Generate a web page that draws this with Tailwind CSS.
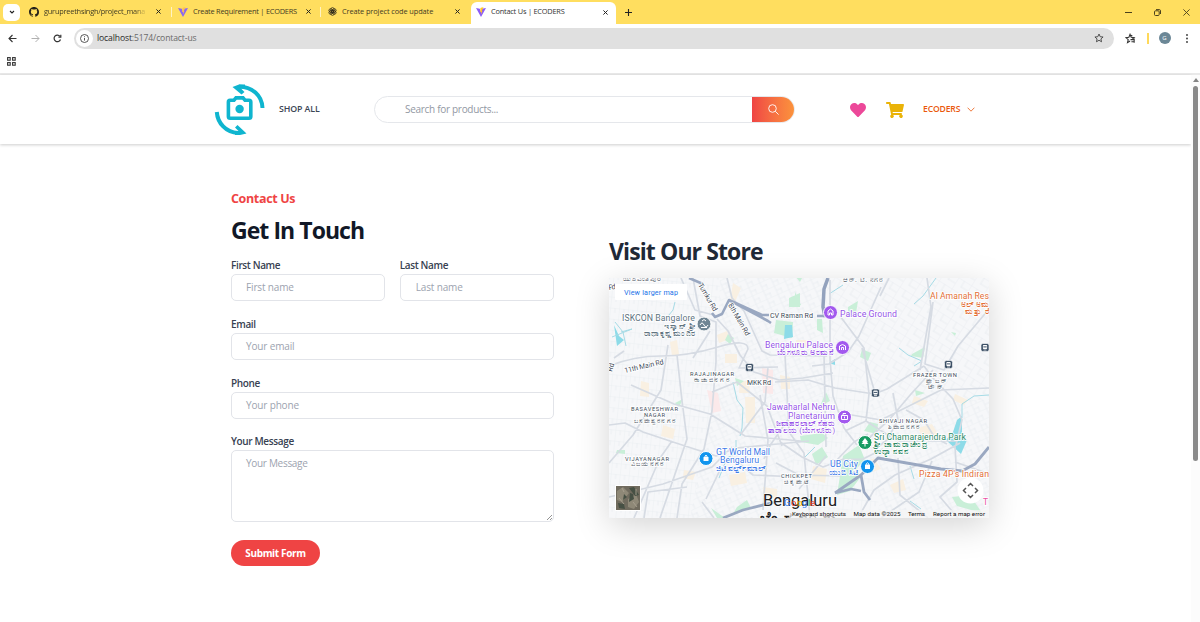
<!DOCTYPE html>
<html lang="en">
<head>
<meta charset="utf-8">
<title>Contact Us | ECODERS</title>
<script src="https://cdn.jsdelivr.net/npm/@tailwindcss/browser@4"></script>
</head>
<body class="w-[1200px] h-[622px] overflow-hidden bg-white font-['Open_Sans','Noto_Sans',sans-serif] text-[#1f2937]">
<div class="flex flex-col h-[622px]">

<!-- Tab strip -->
<div class="flex h-6 shrink-0 items-center bg-[#ffde5f] text-[7.4px] tracking-[-0.22px] text-[#3f3a24]">
  <div class="ml-[3px] flex h-[17px] w-[17px] items-center justify-center rounded-[5px] bg-white">
    <svg class="size-[6px]" viewBox="0 0 6 6" fill="none" stroke="#222" stroke-width="1.1"><path d="M1 2l2 2 2-2"/></svg>
  </div>
  <div class="flex w-[151px] items-center pl-[9px]">
    <svg class="size-[10px] shrink-0" viewBox="0 0 16 16" fill="#24211a"><path d="M8 0C3.58 0 0 3.58 0 8c0 3.54 2.29 6.53 5.47 7.59.4.07.55-.17.55-.38v-1.49c-2.01.37-2.53-.49-2.69-.94-.09-.23-.48-.94-.82-1.13-.28-.15-.68-.52-.01-.53.63-.01 1.08.58 1.23.82.72 1.21 1.87.87 2.33.66.07-.52.28-.87.51-1.07-1.78-.2-3.64-.89-3.64-3.95 0-.87.31-1.59.82-2.15-.08-.2-.36-1.02.08-2.12 0 0 .67-.21 2.2.82a7.5 7.5 0 014 0c1.53-1.04 2.2-.82 2.2-.82.44 1.1.16 1.92.08 2.12.51.56.82 1.27.82 2.15 0 3.07-1.87 3.75-3.65 3.95.29.25.54.73.54 1.48v2.2c0 .21.15.46.55.38A8 8 0 0016 8c0-4.42-3.58-8-8-8z"/></svg>
    <span class="ml-[5px] w-[103px] overflow-hidden whitespace-nowrap [mask-image:linear-gradient(to_right,black_88%,transparent)]">gurupreethsingh/project_mana</span>
    <svg class="ml-[9px] size-[5px] shrink-0" viewBox="0 0 6 6" stroke="#222" stroke-width="1.2"><path d="M.5.5l5 5M5.500.5l-5 5"/></svg>
  </div>
  <div class="h-[10px] w-px bg-[#fff3c4]"></div>
  <div class="flex w-[148px] items-center pl-[6px]">
    <svg class="size-[10px] shrink-0" viewBox="0 0 10 10"><path d="M0 1l5 9 5-9-4.500.8L5 5 3.800 1.700z" fill="#8b68f0"/><path d="M5.800.5L7.500.2 5.700 4.200 6.500 4 4.900 7.500 5.200 4.900 4.200 5.100 4.400 1z" fill="#ffc24a"/></svg>
    <span class="ml-[5px] w-[104px] whitespace-nowrap">Create Requirement | ECODERS</span>
    <svg class="ml-[9px] size-[5px] shrink-0" viewBox="0 0 6 6" stroke="#222" stroke-width="1.2"><path d="M.5.5l5 5M5.500.5l-5 5"/></svg>
  </div>
  <div class="h-[10px] w-px bg-[#fff3c4]"></div>
  <div class="flex w-[150px] items-center pl-[7px] tracking-[-0.1px]">
    <svg class="size-[9px] shrink-0" viewBox="0 0 10 10" fill="none" stroke="#2c281b" stroke-width=".8"><ellipse cx="5" cy="3.300" rx="2" ry="2.700"/><ellipse cx="5" cy="6.700" rx="2" ry="2.700"/><ellipse cx="3.500" cy="4.200" rx="2" ry="2.700" transform="rotate(-60 3.500 4.200)"/><ellipse cx="6.500" cy="5.800" rx="2" ry="2.700" transform="rotate(-60 6.500 5.800)"/><ellipse cx="3.500" cy="5.800" rx="2" ry="2.700" transform="rotate(60 3.500 5.800)"/><ellipse cx="6.500" cy="4.200" rx="2" ry="2.700" transform="rotate(60 6.500 4.200)"/></svg>
    <span class="ml-[5px] w-[104px] whitespace-nowrap">Create project code update</span>
    <svg class="ml-[9px] size-[5px] shrink-0" viewBox="0 0 6 6" stroke="#222" stroke-width="1.2"><path d="M.5.5l5 5M5.500.5l-5 5"/></svg>
  </div>
  <div class="flex h-[22px] w-[145px] items-center self-end rounded-t-[6px] bg-white pb-[2px] pl-[5px] text-[#333]">
    <svg class="size-[10px] shrink-0" viewBox="0 0 10 10"><path d="M0 1l5 9 5-9-4.500.8L5 5 3.800 1.700z" fill="#8b5cf6"/><path d="M5.800.5L7.500.2 5.700 4.200 6.500 4 4.900 7.500 5.200 4.900 4.200 5.100 4.400 1z" fill="#ffc928"/></svg>
    <span class="ml-[5px] w-[103px] whitespace-nowrap">Contact Us | ECODERS</span>
    <svg class="ml-[9px] size-[5px] shrink-0" viewBox="0 0 6 6" stroke="#222" stroke-width="1.2"><path d="M.5.5l5 5M5.500.5l-5 5"/></svg>
  </div>
  <svg class="ml-[9px] size-[7px]" viewBox="0 0 7 7" stroke="#222" stroke-width="1.1"><path d="M3.500 0v7M0 3.500h7"/></svg>
  <div class="ml-auto flex items-center gap-[22px] pr-[10px]">
    <svg class="h-[7px] w-[7px]" viewBox="0 0 7 7" stroke="#4a401c" stroke-width="1"><path d="M0 3.500h7"/></svg>
    <svg class="size-[7px]" viewBox="0 0 7 7" fill="none" stroke="#4a401c" stroke-width="1"><rect x=".5" y="1.800" width="4.700" height="4.700" rx="1"/><path d="M2 .6h3.200q1.300 0 1.300 1.300V5"/></svg>
    <svg class="size-[7px]" viewBox="0 0 7 7" stroke="#4a401c" stroke-width=".9"><path d="M.4.4l6.200 6.200M6.600.4L.4 6.600"/></svg>
  </div>
</div>

<!-- Address bar -->
<div class="flex h-7 shrink-0 items-center bg-white">
  <svg class="ml-2 size-[9px]" viewBox="0 0 9 9" fill="none" stroke="#333" stroke-width="1.1"><path d="M8.500 4.500H1M4.500 1L1 4.500 4.500 8"/></svg>
  <svg class="ml-[14px] size-[9px]" viewBox="0 0 9 9" fill="none" stroke="#b0b0b0" stroke-width="1"><path d="M.5 4.500H8M4.500 1L8 4.500 4.500 8"/></svg>
  <svg class="ml-[13px] size-[9px]" viewBox="0 0 9 9" fill="none" stroke="#333" stroke-width="1.200"><path d="M7.500 5.500A3.300 3.300 0 1 1 7 2.300"/><path d="M7.800.8v2.400H5.400"/></svg>
  <div class="ml-[12px] flex h-[21px] w-[1040px] shrink-0 items-center rounded-full bg-[#e0e0e0] pl-[2px] pr-[10px]">
    <div class="flex size-[17px] items-center justify-center rounded-full bg-white">
      <svg class="size-[9px]" viewBox="0 0 9 9" fill="none" stroke="#444" stroke-width=".9"><circle cx="4.500" cy="4.500" r="4"/><path d="M4.500 4v2.600M4.500 2.300v.9"/></svg>
    </div>
    <span class="ml-1 text-[8.6px] tracking-[-0.13px] text-[#6a6a6a]"><span class="text-[#2a2a2a]">localhost</span>:5174/contact-us</span>
    <svg class="ml-auto size-[10px]" viewBox="0 0 24 24" fill="none" stroke="#444" stroke-width="2.200"><path d="M12 2.500l2.900 6.400 6.900.7-5.200 4.600 1.500 6.800L12 17.500 5.900 21l1.500-6.800L2.200 9.600l6.900-.7z"/></svg>
  </div>
  <svg class="ml-[11px] size-[11px] shrink-0" viewBox="0 0 24 24" fill="none" stroke="#333" stroke-width="2.400"><path d="M11 17.500L5.500 21 7 14.500 2 10l6.500-.7L11 3l2.500 6.300 6.500.7-4 3.500"/><path d="M13 5l3 1.500M12 14.500h9M14 19h7M20 12v9"/></svg>
  <div class="ml-[11px] h-[11px] w-[1.5px] shrink-0 bg-[#ffd95a]"></div>
  <div class="ml-[10px] flex size-[12px] shrink-0 items-center justify-center rounded-full bg-[#6b8796] text-[6px] text-white">G</div>
  <svg class="ml-[14px] h-[9px] w-[4px] shrink-0" viewBox="0 0 4 9" fill="#333"><circle cx="2" cy="1" r=".9"/><circle cx="2" cy="4.500" r=".9"/><circle cx="2" cy="8" r=".9"/></svg>
</div>
<div class="flex h-[23px] shrink-0 items-center border-b-2 border-[#e9e9e9] pl-[7px]">
  <svg class="mb-[3px] size-[9px]" viewBox="0 0 9 9" fill="none" stroke="#333" stroke-width="1.100"><rect x=".6" y=".6" width="2.600" height="2.600"/><rect x="5.600" y=".6" width="2.600" height="2.600"/><rect x=".6" y="5.600" width="2.600" height="2.600"/><rect x="5.600" y="5.600" width="2.600" height="2.600"/></svg>
</div>

<div class="flex min-h-0 flex-1">
<div class="flex w-[1191px] flex-col">
  <!-- Site header -->
  <header class="flex h-[69px] shrink-0 items-center bg-white shadow-[0_1px_3px_rgba(0,0,0,0.2)]">
    <svg class="ml-[214px] h-[52px] w-[52px]" viewBox="0 0 52 52" fill="none" stroke="#0fb5cf">
      <path d="M25 2.500C38 3 48 11 48.500 24" stroke-width="4"/><path d="M18.500 3L25 .5h6v4h-4l3.500 3.500L27.500 10.500z" fill="#0fb5cf" stroke="none"/>
      <path d="M2.800 28C3.500 39 12 48.500 24 49" stroke-width="4"/><path d="M32.500 49.500L26 51h-5v-4h3.500L21 43.500l2.500-2.500z" fill="#0fb5cf" stroke="none"/>
      <path d="M16 16.200h4l2-2.300h7l2 2.300h4q1.800 0 1.800 1.800v14.500q0 1.800-1.800 1.800H16.200q-1.800 0-1.800-1.800V18q0-1.800 1.600-1.800z" stroke-width="3.600"/><circle cx="25.600" cy="25" r="4.200" fill="#0fb5cf" stroke="none"/>
    </svg>
    <a class="ml-[13px] w-[95px] whitespace-nowrap text-[8.8px] font-semibold tracking-[-0.1px] text-[#3b4554]">SHOP ALL</a>
    <div class="flex h-[27px] w-[421px] overflow-hidden rounded-full border border-[#e5e7eb]">
      <div class="flex flex-1 items-center pl-[30px] text-[10px] tracking-[-0.3px] text-[#9298a3]">Search for products...</div>
      <div class="flex w-[42px] items-center justify-center bg-linear-to-r from-[#ef4444] to-[#fb923c]">
        <svg class="size-[11px]" viewBox="0 0 11 11" fill="none" stroke="#fff" stroke-width=".9"><circle cx="4.500" cy="4.500" r="3.800"/><path d="M7.300 7.300l3.300 3.300"/></svg>
      </div>
    </div>
    <svg class="ml-[55px] h-[14px] w-[16px]" viewBox="0 0 512 448" fill="#ec4899"><path d="M462 31C407-15 326-7 276 45l-20 20-20-20C186-7 105-15 50 31c-63 54-66 150-10 208l193 200c13 13 33 13 46 0l193-200c56-58 53-154-10-208z"/></svg>
    <svg class="ml-[20px] h-[16px] w-[18px]" viewBox="0 0 576 512" fill="#eab308"><path d="M528 301l47-208c4-15-8-29-23-29H159l-9-45C148 8 138 0 127 0H24C11 0 0 11 0 24v16c0 13 11 24 24 24h70l70 343a56 56 0 1067 9h210a56 56 0 1064-10l5-26c4-15-8-29-23-29H218l-6-32h293c11 0 21-8 23-18z"/></svg>
    <span class="ml-[19px] whitespace-nowrap text-[8.600px] font-semibold tracking-[-0.15px] text-[#ea580c]">ECODERS</span>
    <svg class="ml-[7px] h-[5px] w-[8px]" viewBox="0 0 8 5" fill="none" stroke="#ea580c" stroke-width=".8"><path d="M.6.7L4 4.200 7.400.7"/></svg>
  </header>

  <main class="flex">
    <form class="ml-[231px] mt-[46px] w-[322.500px] text-[#1f2937]">
      <div class="text-[12.500px] font-bold leading-[18px] tracking-[-0.35px] text-[#ef4444]">Contact Us</div>
      <h1 class="mt-[5px] text-[23px] font-bold leading-[35px] tracking-[-0.95px] text-[#111827]">Get In Touch</h1>
      <div class="mt-[9px] flex gap-[15px]">
        <div class="flex-1"><label class="block text-[10px] font-semibold leading-[16px] tracking-[-0.36px] text-[#374151]">First Name</label><div class="mt-[1px] flex h-[27px] items-center rounded-[5px] border border-[#e2e4e9] pl-[14px] text-[10px] tracking-[-0.15px] text-[#9ca3af]">First name</div></div>
        <div class="flex-1"><label class="block text-[10px] font-semibold leading-[16px] tracking-[-0.36px] text-[#374151]">Last Name</label><div class="mt-[1px] flex h-[27px] items-center rounded-[5px] border border-[#e2e4e9] pl-[15px] text-[10px] tracking-[-0.15px] text-[#9ca3af]">Last name</div></div>
      </div>
      <label class="mt-[15px] block text-[10px] font-semibold leading-[16px] tracking-[-0.36px] text-[#374151]">Email</label><div class="mt-[1px] flex h-[27px] items-center rounded-[5px] border border-[#e2e4e9] pl-[14px] text-[10px] tracking-[-0.15px] text-[#9ca3af]">Your email</div>
      <label class="mt-[15px] block text-[10px] font-semibold leading-[16px] tracking-[-0.36px] text-[#374151]">Phone</label><div class="mt-[1px] flex h-[27px] items-center rounded-[5px] border border-[#e2e4e9] pl-[14px] text-[10px] tracking-[-0.15px] text-[#9ca3af]">Your phone</div>
      <label class="mt-[14px] block text-[10px] font-semibold leading-[16px] tracking-[-0.36px] text-[#374151]">Your Message</label>
      <div class="mt-[1px] flex h-[72px] justify-between rounded-[5px] border border-[#e2e4e9] pl-[14px] pt-[5px] text-[10px] leading-[15px] tracking-[-0.3px] text-[#9ca3af]">Your Message
        <svg class="size-[7px] self-end" viewBox="0 0 7 7" stroke="#777" stroke-width=".8"><path d="M1 6l5-5M4 6l2-2"/></svg>
      </div>
      <div class="mt-[18px] flex h-[26px] w-[89px] items-center justify-center rounded-full bg-[#ef4444] text-[10px] font-bold tracking-[-0.35px] text-white">Submit Form</div>
    </form>

    <section class="ml-[55.500px] mt-[89px] w-[380px]">
      <h2 class="text-[23px] font-bold leading-[36px] tracking-[-0.9px] text-[#1f2937]">Visit Our Store</h2>
      <svg class="mt-[9px] block h-[240px] w-[380px] shadow-[0_8px_32px_rgba(0,0,0,0.17)]" viewBox="609 278 380 240" font-family="Roboto, 'Noto Sans', sans-serif">
        <defs>
          <pattern id="s1" width="9" height="11" patternUnits="userSpaceOnUse" patternTransform="rotate(6)"><path d="M0 0H9M0 0V11M5 0V5" stroke="#eaedf1" stroke-width=".8" fill="none"/></pattern>
          <pattern id="s2" width="12" height="9" patternUnits="userSpaceOnUse" patternTransform="rotate(-24)"><path d="M0 0H12M3 0V9M8 4V9M3 5H9" stroke="#eaedf1" stroke-width=".8" fill="none"/></pattern>
          <pattern id="s3" width="15" height="13" patternUnits="userSpaceOnUse" patternTransform="rotate(32)"><path d="M0 0H15M0 0V13M7 0V8M7 7H15" stroke="#e9ecf0" stroke-width=".8" fill="none"/></pattern>
          <g id="train"><rect x="-4" y="-4" width="8" height="8" rx="1.800" fill="#3d5167" stroke="#fff" stroke-width=".6"/><rect x="-2.100" y="-2.400" width="4.200" height="3.900" rx=".7" fill="#fff"/><path d="M-1.700 -.6h3.400" stroke="#3d5167" stroke-width="1"/><path d="M-1.500 2.500h3" stroke="#fff" stroke-width=".7"/></g>
        </defs>
        <rect x="609" y="278" width="380" height="240" fill="#f6f7f9"/>
        <!-- Side streets by district -->
        <path d="M609 278H720L716 380 690 518H609z" fill="url(#s1)"/>
        <path d="M720 278H826L830 400 760 518H690L716 380z" fill="url(#s2)"/>
        <path d="M830 330L870 400 880 518H760L815 420z" fill="url(#s1)"/>
        <path d="M826 278H989V400H870L830 330z" fill="url(#s3)"/>
        <path d="M870 400H989V518H880z" fill="url(#s2)"/>
        <g fill="#f9f0e2"><path d="M641 381l8 2v14l-9-1zM663 425l12 4-2 10-12-3zM717 335l10-4 3 8-11 4zM725 354h12v9h-12zM670 342l7-2 2 15-7 1zM740 381h9l1 12h-11zM745 397l10 0 0 26-9 0zM684 470l12 2-3 8-10-2zM729 475l16-3 2 11-16 3zM780 375l10 2v12h-9zM796 340h13v7h-13zM914 396l14 5-4 6-12-4zM918 428l14-4 6 10-15 4zM862 464l12-6 7 11-15 5zM813 466l14 3-2 14-14-4zM890 485l13-6 3 11-12 3zM955 394l13 6-4 5-11-5zM763 487l14 2v9h-14zM733 283l8 5-6 14-5-2z"/></g>
        <g fill="#fbe9ea"><path d="M707 390l11 3 3 18-9 2zM762 368l11 2v24l-10-1z"/></g>
        <g fill="#c9efd8"><path d="M789 298l11-5v14h-11zM776 320l17 2-1 16-18-5zM795 292l6 13-6 2zM817 319l5 0 1 14-6-3zM728 334l6 4-4 6-5-4zM735 378l9 3-7 5zM675 403l8-4-4 8zM617 450l8 0 0 4-9-1zM711 508l14 10h-8zM737 507l10-7 4 8-18 6zM862 349l9 4-3 8-8-4zM912 354l13-7-2 11-12-2zM870 422l8 2-1 10-13-3zM843 456l16-11 6 15-8 8 3 10-10 13-13 4zM800 436l22-3 6 5-10 7-17-3zM812 454l10-7 6 10-12 8zM826 392l4 9-10 5zM952 497l18-2 12 18-25-7zM795 276l8 0-3 6zM951 332l5 1-1 3zM848 307l10-6-2 12-8 2zM915 390l10 3-9 3z"/></g>
        <g fill="#8ddbe8"><path d="M785 325l7 0 1 12-9 2zM957 420l5-4v18l5 6-6 14-15-14 7-8zM829 363l6-4v6zM614 325l5 11 5 4-7 6z"/></g>
        <g fill="none" stroke="#a6dbe6" stroke-width="1"><path d="M615 322l8 10 3 14M612 337l20-8-11 3M665 320l8-10 2-8M733 382l4 18 6 8-1 20-2 8M736 440l0 13-9 5-8 20M829 294l14-9M914 304l9-8 13-18M899 348l9 7 14 6-8 5M962 418v-14l12-8 15-1M805 457l10-10M914 479l-4-13M910 501l11 8"/></g>
        <!-- Main roads -->
        <g fill="none" stroke="#d6dbe3" stroke-width="1.700" stroke-linejoin="round"><path d="M609 366q25-10 52-10t57-9 30 2l-9 19 39-1M609 425l16-2 18 9 33 11 40 13 20-8 73-7M693 278l7 38 16 6v40l-4 49-8 38-22 35-5 34M681 278l14 32 22 6M717 319l11 12 12 24 14 17 25 8 24-2 30-5M710 331l-17 27M668 345l-7 45-28 45-24 28M609 497l54-13 49-17 20-20M634 518l26-60 12-17M631 385l43 19 36 10 35 22 56 5M727 278l5 20 12 13 18 40 8 4 57 1M614 358l10-7M677 355l5 46 5 38-27 79M712 392l25-10 30 24 15 40M741 434l24-32 3-35M760 395l8 45-5 70M785 355l4 77 15 21 6 65M824 355l2 92M830 280l0 79 3 37 11 32 13 17M840 316l24 32 5 46-3 27-21 10M881 287l-22 49-11 16-19 12-17 2M862 348l13 45M933 302l-8 62 19 6 14-24 31-37M889 278l-9 18M927 278l4 29-11 63M924 366l-37 23-13 5-39-6-27-8-33 2M924 366l8 11 21 22 9 21-6 25M893 393l5 27-11 20-12 9M866 421l31 20 59 0M846 414l35 6 60-30 48-2M869 438l20-18 22-26 22-24M906 410l18 10 11 18 12 6M883 449l-20 10-33 1M835 462l19-20 14-8M780 442l22 15 21 10 21-8M789 418l-18 26-7 15M826 456l-27 33M960 443l-29 16-36 16-21 15-16 28M955 446l2 36-17 15 18 21M955 462l34 12M898 458l2 37 28 23M932 461l-13 31-38 26M776 463l23 12 42 1M741 465l12 10 46 2M702 502l12 16M720 470l-14 29M644 518l4-26 39-5"/></g>
        <g fill="none" stroke="#9aa8c1" stroke-linejoin="round"><path d="M689 278l14 6M712 313l3 4 7-3 7-14 39 21 3 2M729 300l33 15h7M817 316h8" stroke-width="2.600"/><path d="M828 278l-4 11-1 18 2 10" stroke="#93a2bd" stroke-width="3.500"/><path d="M723 518l20-8 32-8M861 475l17-17 63 11 21 2 13-7 14-17M861 475l-26 18M861 475l3 17 6 8M835 493l16-4 10 2" stroke-width="2.800"/></g>
        <!-- Labels -->
        <g stroke="#fff" stroke-width="2" stroke-linejoin="round" paint-order="stroke" stroke-opacity=".85">
          <g fill="#3f4a57" font-size="7.200">
            <text x="623" y="280.500" textLength="38">ಯಶವಂತಪುರ</text><text transform="translate(609 290) rotate(-10)" textLength="7">Rd</text>
            <text transform="translate(698 285) rotate(60)" textLength="31">Tumkur Rd</text><text transform="translate(728 305) rotate(60)" textLength="36">8th Main Rd</text>
            <text x="770" y="317.500" textLength="43">CV Raman Rd</text><text transform="translate(625 373) rotate(-13)" textLength="40">11th Main Rd</text><text x="747" y="384.500" textLength="24">MKK Rd</text>
            <text transform="translate(612 372) rotate(-75)">Rd</text>
          </g>
          <g fill="#424d5a" font-size="5.800">
            <text x="690" y="375.500" textLength="44">RAJAJINAGAR</text><text x="694" y="381.500" font-size="6.500" textLength="35">ರಾಜಾಜಿನಗರ</text>
            <text x="631" y="410.500" textLength="47">BASAVESHWAR</text><text x="644" y="416.500" textLength="21">NAGAR</text><text x="634" y="422.500" font-size="6.500" textLength="41">ಬಸವೇಶ್ವರನಗರ</text>
            <text x="625" y="460.500" textLength="44">VIJAYANAGAR</text><text x="631" y="466" font-size="6.500" textLength="32">ವಿಜಯನಗರ</text>
            <text x="913" y="377" textLength="44">FRAZER TOWN</text><text x="926" y="383" font-size="6.500" textLength="20">ಫ್ರೇಜರ್</text><text x="928" y="388.500" font-size="6.500" textLength="15">ಟೌನ್</text>
            <text x="879" y="422.500" textLength="48">SHIVAJI NAGAR</text><text x="888" y="428.500" font-size="6.500" textLength="31">ಶಿವಾಜಿನಗರ</text>
            <text x="781" y="477.500" textLength="31">CHICKPET</text><text x="784" y="483.500" font-size="6.500" textLength="24">ಚಿಕ್ಕಪೇಟೆ</text><text x="843" y="282" font-size="7" textLength="40">ಆರ್. ಟಿ. ನಗರ</text>
          </g>
          <g fill="#607481" font-size="8.800"><text x="622" y="321" textLength="73">ISKCON Bangalore</text><text x="664" y="328.500" font-size="7.500" textLength="31">ಇಸ್ಕಾನ್ ಶ್ರೀ</text><text x="644" y="335.500" font-size="7.500" textLength="51">ರಾಧಾಕೃಷ್ಣ ಮಂದಿರ</text></g>
          <g fill="#9654e8" font-size="8.800"><text x="840" y="317" textLength="57">Palace Ground</text><text x="765" y="348" textLength="68">Bengaluru Palace</text><text x="777" y="355" font-size="7.500" textLength="56">ಬೆಂಗಳೂರು ಅರಮನೆ</text><text x="767" y="410" textLength="68">Jawaharlal Nehru</text><text x="788" y="418.500" textLength="47">Planetarium</text><text x="776" y="425.500" font-size="7.500" textLength="59">ಜವಾಹರಲಾಲ್ ನೆಹರು</text><text x="768" y="432.500" font-size="7.500" textLength="67">ತಾರಾಲಯ (ಬೆಂಗಳೂರು)</text></g>
          <g fill="#3d7bea" font-size="8.800"><text x="716" y="454.500" textLength="54">GT World Mall</text><text x="720" y="463" textLength="39">Bengaluru</text><text x="716" y="470.500" font-size="7.500" textLength="50">ಜಿಟಿ ವರ್ಲ್ಡ್ ಮಾಲ್</text><text x="830" y="467" textLength="28">UB City</text><text x="829" y="474.500" font-size="7.500" textLength="29">ಯುಬಿ ಸಿಟಿ</text></g>
          <g fill="#2f8b66" font-size="8.800"><text x="874" y="440" textLength="92">Sri Chamarajendra Park</text><text x="874" y="447" font-size="7.500" textLength="53">ಶ್ರೀ ಚಾಮರಾಜೇಂದ್ರ</text><text x="874" y="454" font-size="7.500" textLength="34">ಉದ್ಯಾನವನ</text></g>
          <g fill="#e46f35" font-size="8.800"><text x="930" y="299" textLength="59">Al Amanah Res</text><text x="961" y="306.500" font-size="7.500" textLength="28">ಅಲ್ ಅಮ</text><text x="965" y="313.500" font-size="7.500" textLength="24">ಮತ್ತು ರೆ</text><text x="919" y="476.500" textLength="70">Pizza 4P's Indiran</text></g>
          <text x="983" y="505" font-size="8.500" fill="#ec4fa5">T</text>
          <text x="763" y="506" font-size="16.500" fill="#202124" stroke-width="1.500" textLength="74">Bengaluru</text><text x="760" y="523" font-size="15" font-weight="bold" fill="#202124" textLength="76">ಬೆಂಗಳೂರು</text>
        </g>
        <!-- Pins -->
        <g stroke="#fff" stroke-width="1">
          <circle cx="704" cy="324" r="7" fill="#6f8593"/><circle cx="830.500" cy="312.500" r="7" fill="#a259ee"/><circle cx="842.500" cy="347.500" r="7" fill="#a259ee"/><circle cx="844.500" cy="417" r="7" fill="#a259ee"/><circle cx="706" cy="458.500" r="7" fill="#1295ee"/><circle cx="867.500" cy="466.500" r="7" fill="#1295ee"/><circle cx="865" cy="442.500" r="7" fill="#169b62"/>
        </g>
        <g fill="none" stroke="#fff" stroke-width="1"><path d="M700 325q2-4 4 0t4 0M702 321l2-1.500 2 1.500M701 327.500h6M828 315v-4l2.500-2 2.500 2v4h-1.500v-2h-2v2zM839.500 350v-4l3-1.500 3 1.500v4M841.500 350v-2.500h2v2.500M841.500 415.500h6v4h-6zM843 415v-1.500h3M705 457v-1q1-1.500 2 0v1M866.500 464.500v-1q1-1.500 2 0v1M844.500 416.500v2"/></g>
        <g fill="#fff"><path d="M703.500 457h5v4h-5zM865 464.500h5v4.500h-5zM865 438l3 4h-1l1.500 2h-3v2.500h-1V444h-3l1.500-2h-1z"/></g>
        <use href="#train" x="749.500" y="367.500"/><use href="#train" x="875.500" y="393"/><use href="#train" x="948.500" y="364.500"/><use href="#train" x="985" y="347.500"/>
        <!-- Map controls -->
        <rect x="615" y="284" width="72" height="16" rx="1" fill="#fff"/><text x="624" y="294.500" font-size="7.200" fill="#1a73e8" textLength="54">View larger map</text>
        <rect x="615" y="485" width="26" height="26" rx="1" fill="#fff"/><rect x="616" y="486" width="24" height="24" fill="#706b5e"/><path d="M617 491l6-4 6 6-7 9-5-2zM628 499l8-5 3 8-5 7-6-2z" fill="#8e8877"/><path d="M629 488l5-1 5 8-4 1zM630 493l3 1 1 5-5 3zM618 503l6 1 1 5-6-1zM624 494l3 3-4 3z" fill="#465044"/><path d="M622 488l2 4M633 502l4 5M619 498l5 6M636 489v6" stroke="#a9a291" stroke-width=".9"/>
        <circle cx="970.500" cy="490.500" r="13" fill="#fff"/><path d="M968 486l2.500-2.500 2.500 2.500M968 495l2.500 2.500 2.500-2.500M966 488l-2.500 2.500 2.500 2.500M975 488l2.500 2.500-2.500 2.500" fill="none" stroke="#555" stroke-width="1.500"/>
        <g font-size="9.500" font-weight="500" opacity=".85"><text x="784" y="506" fill="#4285f4">G</text><text x="791" y="506" fill="#ea4335">o</text><text x="797" y="506" fill="#fbbc04">o</text><text x="802" y="506" fill="#4285f4">g</text><text x="808" y="506" fill="#34a853">l</text><text x="810" y="506" fill="#ea4335">e</text></g>
        <rect x="789" y="510" width="200" height="8" fill="#f5f5f5" opacity=".7"/>
        <g font-size="6.200" fill="#111"><text x="792" y="515.800" textLength="54">Keyboard shortcuts</text><text x="853.500" y="515.800" textLength="47">Map data ©2025</text><text x="908" y="515.800" textLength="17">Terms</text><text x="933" y="515.800" textLength="52">Report a map error</text></g>
      </svg>
    </section>
  </main>
</div>
<!-- Scrollbar -->
<div class="flex w-[9px] flex-col items-center bg-[#fcfcfc] pt-[3px]">
  <div class="h-0 w-0 border-x-[3px] border-b-[4px] border-x-transparent border-b-[#858585]"></div>
  <div class="mt-[4px] h-[375px] w-[5px] rounded-full bg-[#8a8a8a]"></div>
</div>
</div>
</div>
</body>
</html>
